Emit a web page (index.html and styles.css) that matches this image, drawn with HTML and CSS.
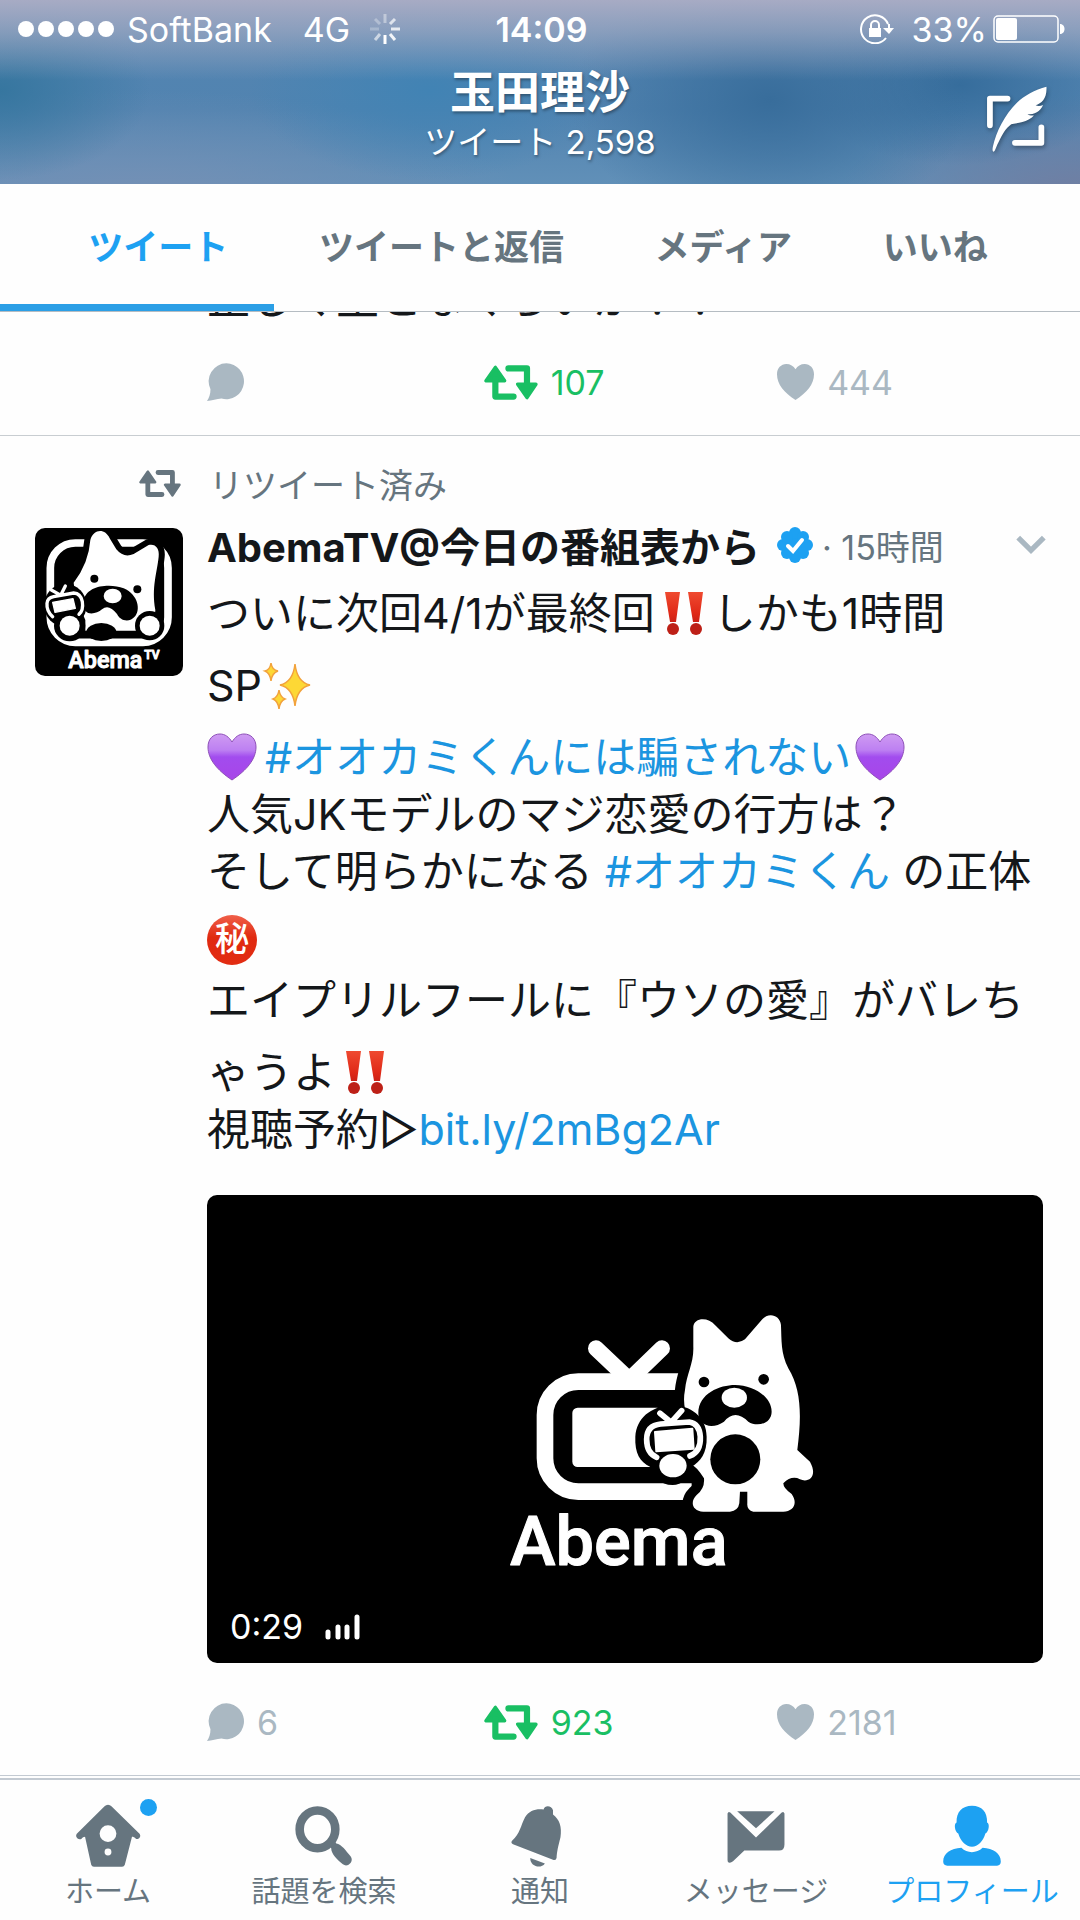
FILE: index.html
```html
<!DOCTYPE html>
<html lang="ja">
<head>
    <meta charset="UTF-8">
    <meta name="viewport" content="width=device-width, initial-scale=1.0">
    <title>玉田理沙 - ツイート</title>
    <link rel="stylesheet" href="styles.css">
</head>
<body>
    <!-- shared icons -->
    <svg class="defs" aria-hidden="true">
        <symbol id="reply" viewBox="0 0 107 110">
            <path d="M56 1a51 52 0 1 1-14 102C28 103 14 110 0 110c6-10 10-20 10-34A52 52 0 0 1 56 1z"/>
        </symbol>
        <symbol id="retweet" viewBox="0 0 157 100">
            <path d="M33 6 6 45h54zM125 94 98 55h53z" stroke="currentColor" stroke-width="10" stroke-linejoin="round"/>
            <path d="M33 40v51h53M71 9h54v50" fill="none" stroke="currentColor" stroke-width="18" stroke-linecap="round" stroke-linejoin="round"/>
        </symbol>
        <symbol id="heart" viewBox="0 0 36 35">
            <path d="M18 35C7 28 0 20 0 10 0 4 4 0 9 0c4 0 7 2 9 5 2-3 5-5 9-5 5 0 9 4 9 10 0 10-7 18-18 25z"/>
        </symbol>
        <symbol id="purple-heart" viewBox="0 0 50 48">
            <linearGradient id="purple" x1="0" y1="0" x2="0" y2="1">
                <stop offset="0" stop-color="#cf9bf2"/>
                <stop offset="0.35" stop-color="#bd80f2"/>
                <stop offset="0.5" stop-color="#a24cee"/>
                <stop offset="1" stop-color="#a845e8"/>
            </linearGradient>
            <path d="M25 47C10 37 1 26 1 14 1 6 6 1 13 1c5 0 9 3 12 8 3-5 7-8 12-8 7 0 12 5 12 13 0 12-9 23-24 33z" fill="url(#purple)" stroke="#8d4fb8"/>
        </symbol>
        <symbol id="bangs" viewBox="0 0 38 44">
            <linearGradient id="red" x1="0" y1="0" x2="0" y2="1">
                <stop offset="0" stop-color="#ef4a30"/>
                <stop offset="0.7" stop-color="#e02a18"/>
                <stop offset="1" stop-color="#cc2015"/>
            </linearGradient>
            <path d="M0 1h15l-4 30H5zM23 1h15l-4 30h-6z" fill="url(#red)"/>
            <circle cx="8" cy="38" r="6" fill="#bd2017"/>
            <circle cx="31" cy="38" r="6" fill="#bd2017"/>
        </symbol>
    </svg>

    <header class="top">
        <div class="status">
            <div class="status-left">
                <span class="dots"><i></i><i></i><i></i><i></i><i></i></span>
                <span>SoftBank</span>
                <span class="network">4G</span>
                <svg class="spinner" viewBox="0 0 30 30" fill="none" stroke="#fff" stroke-width="3">
                    <path d="M15 0v9" opacity=".4"/><path d="M25 5l-5 5" opacity=".7"/>
                    <path d="M21 15h9" opacity=".8"/><path d="M20 20l5 6" opacity=".9"/>
                    <path d="M15 21v9"/><path d="M10 20l-5 6" opacity=".6"/>
                    <path d="M9 15H0" opacity=".25"/><path d="M10 10L5 5" opacity=".3"/>
                </svg>
            </div>
            <time class="clock">14:09</time>
            <div class="status-right">
                <svg class="lock" viewBox="0 0 34 30">
                    <path d="M28 10A14 14 0 1 0 26 24M29 10v5" fill="none" stroke="#fff" stroke-width="2"/>
                    <path d="M23 14h11l-5 6z" fill="#fff"/>
                    <path d="M9 14h12v9H9z" fill="#fff"/>
                    <path d="M11 15v-4a4 4 0 0 1 8 0v4" fill="none" stroke="#fff" stroke-width="2"/>
                </svg>
                <span>33%</span>
                <svg class="battery" viewBox="0 0 72 28">
                    <rect x="1" y="1" width="64" height="26" rx="4" fill="none" stroke="#fff" stroke-width="1.5"/>
                    <rect x="3" y="3" width="21" height="22" rx="2" fill="#fff"/>
                    <path d="M67 9c6 0 6 10 0 10z" fill="#fff"/>
                </svg>
            </div>
        </div>
        <div class="title">
            <h1>玉田理沙</h1>
            <p>ツイート 2,598</p>
        </div>
        <button type="button" class="compose" aria-label="ツイートする">
            <svg viewBox="0 0 180 195">
                <path d="M10 116V37h52M84 168h78v-46" fill="none" stroke="#fff" stroke-width="17" stroke-linecap="round" stroke-linejoin="round"/>
                <path d="M177 2c-34 9-66 26-88 48-36 36-60 84-70 128-2 9-2 16 2 16 5-2 6-12 14-27 11-22 21-42 38-54 16-4 50-6 67-26-7 1-14 0-19-3 20 0 38-8 46-28-7 3-14 4-22 1 18-7 34-20 32-55z" fill="#fff"/>
            </svg>
        </button>
    </header>

    <nav class="tabs">
        <a href="#tweets" class="tab active">ツイート</a>
        <a href="#replies" class="tab">ツイートと返信</a>
        <a href="#media" class="tab">メディア</a>
        <a href="#likes" class="tab">いいね</a>
    </nav>

    <main id="tweets">
        <article class="previous">
            <div class="cut"><p>正しく生となくらいか！！</p></div>
            <div class="actions">
                <button type="button" aria-label="返信"><svg class="icon-reply"><use href="#reply"/></svg></button>
                <button type="button" class="retweeted" aria-label="リツイート"><svg class="icon-retweet"><use href="#retweet"/></svg>107</button>
                <button type="button" aria-label="いいね"><svg class="icon-heart"><use href="#heart"/></svg>444</button>
            </div>
        </article>

        <article class="tweet">
            <div class="context">
                <svg><use href="#retweet"/></svg>
                <span>リツイート済み</span>
            </div>
            <a href="#abematv" class="avatar" aria-label="AbemaTV">
                <svg viewBox="44 54 444 444">
                    <rect x="44" y="54" width="444" height="444"/>
                    <rect x="90" y="99" width="353" height="298" rx="75" fill="none" stroke="#fff" stroke-width="23"/>
                    <path d="M160 218Q205 160 210 90C220 55 255 55 268 85L288 118Q310 145 340 132L385 105C405 100 418 115 415 140C410 190 393 230 405 300L400 362H195V330L165 260Z" fill="#fff" stroke="#000" stroke-width="36" paint-order="stroke"/>
                    <ellipse cx="243" cy="366" rx="45" ry="27"/>
                    <path d="M190 275C195 225 270 220 310 235C355 255 360 300 345 318C325 342 298 330 290 312Q265 280 245 298C225 315 185 320 190 275Z"/>
                    <ellipse cx="277" cy="258" rx="27" ry="22" fill="#fff"/>
                    <circle cx="222" cy="206" r="12"/>
                    <circle cx="351" cy="238" r="12"/>
                    <circle cx="135" cy="286" r="64"/>
                    <circle cx="148" cy="347" r="47"/>
                    <circle cx="388" cy="347" r="44"/>
                    <circle cx="148" cy="347" r="30" fill="#fff"/>
                    <circle cx="388" cy="347" r="30" fill="#fff"/>
                    <path d="M97 320Q78 303 80 280Q81 264 100 260L160 249Q181 250 186 275Q190 300 176 313M93 240l25 14M135 228l-12 24" fill="none" stroke="#fff" stroke-width="10" stroke-linecap="round"/>
                    <path d="M97 277l61-11 7 29-61 12z" fill="#fff" stroke="#fff" stroke-width="4" stroke-linejoin="round"/>
                    <text x="144" y="474" class="logo-text" font-size="70">Abema</text>
                    <text x="372" y="447" class="logo-text" font-size="36">TV</text>
                </svg>
            </a>
            <div class="content">
                <div class="author">
                    <strong>AbemaTV@今日の番組表から</strong>
                    <svg class="verified" viewBox="0 0 38 38">
                        <g fill="#1da1f2">
                            <circle cx="19" cy="19" r="14"/>
                            <circle cx="19" cy="7" r="6"/><circle cx="27" cy="11" r="6"/>
                            <circle cx="31" cy="19" r="6"/><circle cx="27" cy="27" r="6"/>
                            <circle cx="19" cy="31" r="6"/><circle cx="11" cy="27" r="6"/>
                            <circle cx="7" cy="19" r="6"/><circle cx="11" cy="11" r="6"/>
                        </g>
                        <path d="M12 20l5 5 9-11" fill="none" stroke="#fff" stroke-width="4" stroke-linecap="round"/>
                    </svg>
                    <time>· 15時間</time>
                    <button type="button" class="more" aria-label="その他">
                        <svg viewBox="0 0 30 18"><path d="M3 2l12 12L27 2" fill="none" stroke="#aab8c2" stroke-width="5"/></svg>
                    </button>
                </div>
                <div class="text">
                    <p>ついに次回4/1が最終回<svg class="emoji" viewBox="-10 -2 58 48"><use href="#bangs" width="38" height="44"/></svg>しかも1時間</p>
                    <p class="tall">SP<svg class="emoji" viewBox="-4 0 58 48">
                        <g fill="#fdd835" stroke="#f2a23c" stroke-width="1.5">
                            <path d="M29 3Q31 21 44 24Q31 27 29 45Q27 27 14 24Q27 21 29 3z"/>
                            <path d="M5 2Q6 9 12 10Q6 12 5 20Q4 12-1 10Q4 9 5 2z"/>
                            <path d="M13 29Q14 36 19 38Q14 40 13 48Q12 40 7 38Q12 36 13 29z"/>
                        </g>
                    </svg></p>
                    <p class="tall"><svg class="emoji" viewBox="0 0 58 48"><use href="#purple-heart" width="50" height="48"/></svg><a href="#ookami">#オオカミくんには騙されない</a><svg class="emoji" viewBox="-4 0 58 48"><use href="#purple-heart" width="50" height="48"/></svg></p>
                    <p>人気JKモデルのマジ恋愛の行方は？</p>
                    <p>そして明らかになる <a href="#ookamikun">#オオカミくん</a> の正体</p>
                    <p class="tall"><span class="secret">秘</span></p>
                    <p>エイプリルフールに『ウソの愛』がバレち</p>
                    <p class="tall">ゃうよ<svg class="emoji" viewBox="-10 -2 58 48"><use href="#bangs" width="38" height="44"/></svg></p>
                    <p>視聴予約▷<a href="#link">bit.ly/2mBg2Ar</a></p>
                </div>
                <div class="video">
                    <svg viewBox="0 0 836 468" role="img" aria-label="Abema">
                        <g transform="translate(283 95) scale(.3333)">
                            <path d="M600 275H265A100 100 0 0 0 165 375V505A100 100 0 0 0 265 605H605" fill="none" stroke="#fff" stroke-width="50"/>
                            <rect x="247" y="353" width="270" height="178" rx="16" fill="#fff"/>
                            <path d="M318 175l92 87M516 175l-90 87" stroke="#fff" stroke-width="48" stroke-linecap="round"/>
                            <path d="M610 110C612 82 655 80 675 105L715 145Q740 167 765 148L815 90C835 65 870 75 873 105C875 150 872 190 895 235C935 300 935 380 922 480L960 515C985 560 955 580 930 568Q905 555 880 580Q880 595 905 612C925 640 910 665 880 665H790Q770 660 772 640V605H750L748 640Q745 662 720 665H640C605 662 600 635 620 615Q645 595 642 565Q620 530 600 520V400Q575 350 585 300C590 250 612 220 610 170Z" fill="#fff" stroke="#000" stroke-width="60" paint-order="stroke"/>
                            <circle cx="642" cy="276" r="16"/>
                            <circle cx="821" cy="268" r="16"/>
                            <path d="M625 370C625 310 690 285 735 285C790 285 845 320 845 365C845 402 800 412 775 395Q735 355 702 395C670 418 625 410 625 370Z"/>
                            <ellipse cx="733" cy="323" rx="38" ry="30" fill="#fff"/>
                            <circle cx="736" cy="508" r="75"/>
                            <path d="M436 440C440 385 480 350 545 345C600 345 650 380 650 440C652 490 630 515 605 530C600 565 575 585 548 585C510 585 490 560 480 530C450 515 434 490 436 440Z"/>
                            <path d="M500 502Q470 490 470 448Q470 406 512 402L598 396Q628 400 631 440Q633 485 600 498M510 370l32 26M575 362l-27 30" fill="none" stroke="#fff" stroke-width="17" stroke-linecap="round"/>
                            <path d="M495 426l112-10 4 60-112 8z" fill="#fff" stroke="#fff" stroke-width="6" stroke-linejoin="round"/>
                            <ellipse cx="549" cy="527" rx="41" ry="35" fill="#fff"/>
                            <text x="60" y="824" class="logo-text" font-size="206">Abema</text>
                        </g>
                    </svg>
                    <div class="duration">
                        <span>0:29</span>
                        <svg viewBox="0 0 35 26" stroke="#fff" stroke-width="5" stroke-linecap="round">
                            <path d="M3 18v5M13 13v10M22 13v10M32 3v20"/>
                        </svg>
                    </div>
                </div>
                <div class="actions">
                    <button type="button" aria-label="返信"><svg class="icon-reply"><use href="#reply"/></svg>6</button>
                    <button type="button" class="retweeted" aria-label="リツイート"><svg class="icon-retweet"><use href="#retweet"/></svg>923</button>
                    <button type="button" aria-label="いいね"><svg class="icon-heart"><use href="#heart"/></svg>2181</button>
                </div>
            </div>
        </article>
    </main>

    <nav class="bottom">
        <a href="#home">
            <svg viewBox="208 100 210 188">
                <path d="M313 104q6 0 10 5l82 80c6 8-2 18-10 15-5-5-8-6-12-6l-21 81q-2 6-8 6h-82q-6 0-8-6l-18-81q-6 0-11 6c-10 4-19-7-13-15l81-80q4-5 10-5zM313 164a24 24 0 1 0 0 49a24 24 0 1 0 0-49zM313 232a10 10 0 1 0 0 20a10 10 0 1 0 0-20z" fill-rule="evenodd"/>
            </svg>
            <b class="unread"></b>
            <span>ホーム</span>
        </a>
        <a href="#search">
            <svg viewBox="836 100 210 188">
                <ellipse cx="922" cy="176" rx="52" ry="55" fill="none" stroke="currentColor" stroke-width="25"/>
                <path d="M956 222l15-13 6 8c15 2 28 21 42 38 10 14-8 34-23 23-16-14-34-30-34-47z"/>
            </svg>
            <span>話題を検索</span>
        </a>
        <a href="#notifications">
            <svg viewBox="78 34 210 200">
                <path d="M97 150c25-22 26-45 40-72 13-21 34-27 57-24 4-15 25-12 29 2v13c20 15 28 38 23 70-7 28-11 44-12 64q-3 9-11 6L100 161q-8-4-3-11z"/>
                <path d="M153 203l45 17c-12 18-46 10-45-17z"/>
            </svg>
            <span>通知</span>
        </a>
        <a href="#messages">
            <svg viewBox="521 100 210 188">
                <path d="M571 123h109l-54 50z"/>
                <path d="M543 130q2-7 8-3l75 73 75-73q6-4 8 3v90q0 18-16 18H592l-33 31q-16 11-16-3z"/>
            </svg>
            <span>メッセージ</span>
        </a>
        <a href="#profile" class="active">
            <svg viewBox="1148 100 210 188">
                <path d="M1253 107c29 0 45 18 44 49 9 3 5 28-5 32-6 21-22 39-39 39s-34-18-40-39c-10-4-14-29-5-32-1-31 16-49 45-49z"/>
                <path d="M1222 230c17 17 44 17 62 0 31 2 53 16 53 40q0 12-11 12h-145q-12 0-12-12c0-24 22-38 53-40z"/>
            </svg>
            <span>プロフィール</span>
        </a>
    </nav>
</body>
</html>
```
FILE: styles.css
```css
* {
    box-sizing: border-box;
}

body {
    margin: 0;
    min-height: 100vh;
    display: flex;
    flex-direction: column;
    font-family: Inter, "Noto Sans CJK JP", sans-serif;
    background-color: #fefefe;
    color: #14171a;
}

h1, p {
    margin: 0;
}

a {
    color: #1b95e0;
    text-decoration: none;
}

button {
    padding: 0;
    border: none;
    background: none;
    font: inherit;
    color: inherit;
    cursor: pointer;
}

svg {
    display: block;
    fill: currentColor;
}

.defs {
    position: absolute;
    width: 0;
    height: 0;
}

/* Header */
.top {
    position: relative;
    height: 184px;
    color: white;
    background:
        linear-gradient(to bottom, #a7abc4 0, rgba(165, 171, 195, 0.65) 32px, rgba(165, 171, 195, 0) 80px),
        radial-gradient(ellipse 150px 90px at 0 90px, #36769f, transparent),
        radial-gradient(ellipse 200px 130px at 770px 100px, #386d9b, transparent),
        radial-gradient(ellipse 160px 80px at 960px 85px, #366d9c, transparent),
        radial-gradient(ellipse 180px 90px at 430px 90px, #4183b4, transparent),
        radial-gradient(ellipse 240px 100px at 1080px 195px, #707da1, transparent),
        radial-gradient(ellipse 380px 110px at 140px 200px, #7590b5, transparent),
        linear-gradient(to bottom, #5586b2, #5183b0 60%, #6190b8);
}

.status {
    display: grid;
    grid-template-columns: 1fr auto 1fr;
    align-items: center;
    height: 58px;
    padding: 0 15px 0 18px;
    font-size: 34px;
}

.status-left,
.status-right {
    display: flex;
    align-items: center;
}

.status-right {
    justify-content: flex-end;
    gap: 6px;
}

.dots {
    display: flex;
    gap: 4px;
    margin-right: 13px;
}

.dots i {
    width: 16px;
    height: 16px;
    border-radius: 50%;
    background-color: white;
}

.network {
    margin: 0 20px 0 31px;
}

.spinner {
    width: 30px;
    height: 30px;
}

.clock {
    font-weight: 600;
}

.lock {
    width: 34px;
    height: 30px;
    margin-right: 12px;
}

.battery {
    width: 72px;
    height: 28px;
}

.title {
    text-align: center;
    text-shadow: 1px 2px 3px rgba(0, 0, 0, 0.35);
}

.title h1 {
    font-size: 45px;
    line-height: 70px;
}

.title p {
    font-size: 33px;
    line-height: 28px;
}

.compose {
    position: absolute;
    right: 32px;
    top: 86px;
    filter: drop-shadow(1px 2px 2px rgba(0, 0, 0, 0.35));
}

.compose svg {
    width: 62px;
    height: 66px;
}

/* Tabs */
.tabs {
    display: flex;
    height: 128px;
    border-bottom: 1px solid #b5bcc2;
    background-color: #fefefe;
}

.tab {
    flex: 1 1 auto;
    padding: 5px 45px 0;
    border-bottom: 7px solid transparent;
    color: #66757f;
    font-size: 35px;
    font-weight: 700;
    line-height: 117px;
    text-align: center;
    white-space: nowrap;
}

.tab:first-child {
    padding-left: 88px;
}

.tab:last-child {
    padding-right: 92px;
}

.tab.active {
    color: #1da1f2;
    border-bottom-color: #2b9fe6;
}

/* Tweets */
.previous {
    padding: 0 37px 0 207px;
    border-bottom: 1px solid #c8cdd1;
}

.cut {
    display: flex;
    align-items: flex-end;
    height: 17px;
    overflow: hidden;
    font-size: 43px;
    line-height: 62px;
    white-space: nowrap;
}

.actions {
    display: grid;
    grid-template-columns: 331fr 351fr 318fr;
    align-items: center;
    height: 106px;
    color: #aab8c2;
    font-size: 34px;
}

.actions button {
    display: flex;
    align-items: center;
    gap: 13px;
    height: 40px;
}

.actions .retweeted {
    color: #19bf63;
}

.icon-reply {
    width: 37px;
    height: 38px;
}

.icon-retweet {
    width: 54px;
    height: 35px;
}

.icon-heart {
    width: 37px;
    height: 36px;
}

.tweet {
    display: grid;
    grid-template-columns: 148px 1fr;
    column-gap: 24px;
    padding: 20px 37px 0 35px;
    border-bottom: 1px solid #c3cad2;
}

.context {
    grid-column: 1 / -1;
    display: flex;
    align-items: center;
    gap: 28px;
    height: 54px;
    padding-left: 104px;
    color: #66757f;
    font-size: 34px;
}

.context svg {
    width: 42px;
    height: 27px;
}

.avatar {
    align-self: start;
    margin-top: 18px;
    border-radius: 10px;
    overflow: hidden;
    color: black;
}

.logo-text {
    font-family: Roboto, sans-serif;
    font-weight: 500;
    fill: white;
    stroke: white;
    stroke-width: 3;
    stroke-linejoin: round;
}

.author {
    display: flex;
    align-items: center;
    height: 70px;
    white-space: nowrap;
}

.author strong {
    font-size: 40px;
    font-weight: 700;
}

.verified {
    width: 38px;
    height: 38px;
    margin: 0 8px 0 16px;
}

.author time {
    color: #66757f;
    font-size: 34px;
}

.more {
    margin-left: auto;
    margin-right: -4px;
}

.more svg {
    width: 32px;
    height: 20px;
}

.text {
    padding-top: 5px;
    font-size: 43px;
    line-height: 57px;
    white-space: nowrap;
}

.text p {
    height: 57px;
}

.text .tall {
    height: 72px;
    padding-top: 15px;
}

.emoji {
    display: inline-block;
    width: 58px;
    height: 48px;
    vertical-align: -8px;
}

.secret {
    display: block;
    width: 50px;
    height: 50px;
    border-radius: 50%;
    background: linear-gradient(to bottom, #f0604a, #e02a10 45%, #e22c12);
    color: white;
    font-size: 34px;
    font-weight: 500;
    line-height: 48px;
    text-align: center;
}

.video {
    position: relative;
    margin-top: 37px;
    margin-bottom: 6px;
    border-radius: 10px;
    overflow: hidden;
    background-color: black;
    color: black;
}

.duration {
    position: absolute;
    left: 23px;
    bottom: 16px;
    display: flex;
    align-items: center;
    gap: 22px;
    color: white;
    font-size: 34px;
}

.duration svg {
    width: 35px;
    height: 26px;
}

/* Bottom bar */
.bottom {
    display: grid;
    grid-template-columns: repeat(5, 1fr);
    flex: 1;
    margin-top: 2px;
    border-top: 2px solid #c3cad2;
}

.bottom a {
    position: relative;
    display: flex;
    flex-direction: column;
    align-items: center;
    padding-top: 23px;
    color: #66757f;
    font-size: 29px;
    line-height: 40px;
}

.bottom a.active {
    color: #1da1f2;
}

.bottom svg {
    width: 72px;
    height: 65px;
    margin-bottom: 4px;
}

.unread {
    position: absolute;
    top: 19px;
    left: calc(50% + 32px);
    width: 17px;
    height: 17px;
    border-radius: 50%;
    background-color: #1da1f2;
}
```
